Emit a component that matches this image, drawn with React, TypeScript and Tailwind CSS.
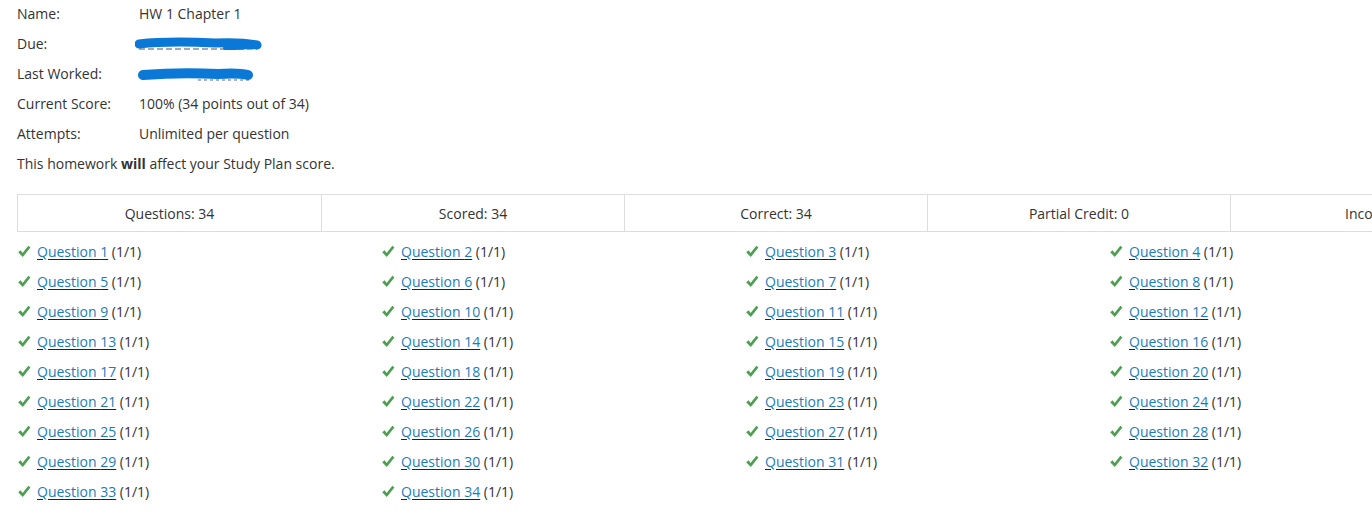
import React from "react";

const details = [
  { label: "Name:", value: "HW 1 Chapter 1" },
  { label: "Due:", redact: "due" },
  { label: "Last Worked:", redact: "worked" },
  { label: "Current Score:", value: "100% (34 points out of 34)" },
  { label: "Attempts:", value: "Unlimited per question" },
];

const stats = ["Questions: 34", "Scored: 34", "Correct: 34", "Partial Credit: 0", "Incorrect: 0"];

const questions = Array.from({ length: 34 }, (_, i) => i + 1);

function Check() {
  return (
    <svg width="14" height="13" viewBox="0 0 14 13" className="shrink-0">
      <path d="M1.2 7.2 L3.6 5.2 L5.6 8 L11.4 0.8 L13.4 2.6 L5.8 12 Z" fill="#4c9f50" />
    </svg>
  );
}

function Scribble({ kind }: { kind: string }) {
  if (kind === "due") {
    return (
      <svg width="130" height="16" viewBox="0 0 130 16" className="-ml-[4px] mt-[4px]">
        <path d="M4 12 H122" stroke="#555" strokeWidth="1.2" strokeDasharray="6 3" />
        <path d="M4 7 C30 4 60 5 80 6 C100 5 112 6 122 8" stroke="#0a78d6" strokeWidth="9" strokeLinecap="round" fill="none" />
        <path d="M90 11 C105 11 115 10 120 9" stroke="#0a78d6" strokeWidth="4" strokeLinecap="round" fill="none" />
      </svg>
    );
  }
  return (
    <svg width="120" height="16" viewBox="0 0 120 16" className="-ml-[1px] mt-[4px]">
      <path d="M60 13 H112" stroke="#666" strokeWidth="1" strokeDasharray="3 3" />
      <path d="M5 8 C30 6 60 6 80 7 C96 6 106 7 110 8" stroke="#0a78d6" strokeWidth="10" strokeLinecap="round" fill="none" />
    </svg>
  );
}

export default function App() {
  return (
    <div className="w-[1372px] h-[527px] overflow-hidden bg-white text-[14px] text-[#333] font-['Open_Sans',sans-serif]">
      <div className="pl-[17px]">
        <div className="flex flex-col -mt-[2px]">
          {details.map((d) => (
            <div key={d.label} className="flex items-center h-[30px]">
              <div className="w-[122px] shrink-0">{d.label}</div>
              {d.value ? <div>{d.value}</div> : <Scribble kind={d.redact!} />}
            </div>
          ))}
          <div className="flex items-center h-[30px]">
            <span>
              This homework <b className="font-bold">will</b> affect your Study Plan score.
            </span>
          </div>
        </div>

        <div className="mt-[16px] flex w-max border border-[#ddd]">
          {stats.map((s, i) => (
            <div
              key={s}
              className={
                "w-[303px] h-[36px] shrink-0 flex items-center justify-center whitespace-nowrap " +
                (i > 0 ? "border-l border-[#ddd]" : "")
              }
            >
              {s}
            </div>
          ))}
        </div>

        <div className="mt-[4px] grid grid-cols-[364px_364px_364px_364px]">
          {questions.map((q) => (
            <div key={q} className="flex items-center h-[30px] gap-[6px]">
              <Check />
              <span>
                <a
                  href="#"
                  className="text-[#1a7db8] underline decoration-[#222] underline-offset-[2px]"
                >
                  Question {q}
                </a>{" "}
                (1/1)
              </span>
            </div>
          ))}
        </div>
      </div>
    </div>
  );
}
